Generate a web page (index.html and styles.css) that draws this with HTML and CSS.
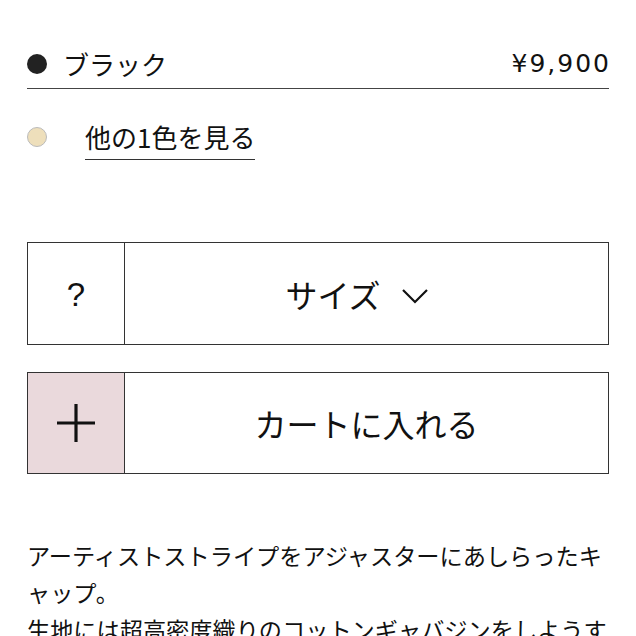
FILE: index.html
```html
<!DOCTYPE html>
<html lang="ja">
<head>
  <meta charset="UTF-8" />
  <meta name="viewport" content="width=device-width, initial-scale=1.0" />
  <title>キャップ</title>
  <link rel="stylesheet" href="styles.css">
</head>
<body>
  <div class="product">
    <div class="color-row">
      <span class="dot dot-black"></span>
      <span class="color-name">ブラック</span>
      <span class="price">¥9,900</span>
    </div>
    <div class="other-row">
      <span class="dot dot-beige"></span>
      <a class="other-link" href="#">他の1色を見る</a>
    </div>

    <div class="action size-box">
      <div class="action-side help">?</div>
      <div class="action-main size-main">
        <span>サイズ</span>
        <svg class="chevron" width="28" height="16" viewBox="0 0 28 16">
          <polyline points="2,2 14,14 26,2" fill="none" stroke="#111" stroke-width="2.2" />
        </svg>
      </div>
    </div>

    <div class="action cart-box">
      <div class="action-side plus">
        <svg width="40" height="40" viewBox="0 0 40 40">
          <line x1="1" y1="20" x2="39" y2="20" stroke="#111" stroke-width="3.2" />
          <line x1="20" y1="1" x2="20" y2="39" stroke="#111" stroke-width="3.2" />
        </svg>
      </div>
      <div class="action-main">カートに入れる</div>
    </div>

    <p class="desc">アーティストストライプをアジャスターにあしらったキャップ。<br>生地には超高密度織りのコットンギャバジンをしようすることで、しなやかな風合いに仕上げました。</p>
  </div>
</body>
</html>
```

FILE: styles.css
```css
body {
  margin: 0;
  background: #fff;
  color: #111;
  font-family: "Noto Sans CJK JP", "Noto Sans", sans-serif;
  overflow: hidden;
}
.product {
  width: 582px;
  margin-left: 27px;
}
.color-row {
  display: flex;
  align-items: center;
  margin-top: 40px;
  height: 48px;
  border-bottom: 1.5px solid #444;
}
.dot {
  width: 20px;
  height: 20px;
  border-radius: 50%;
  flex: none;
  box-sizing: border-box;
}
.dot-black {
  background: #222;
}
.dot-beige {
  background: #eedfbb;
  border: 1px solid #bbb;
  margin-top: 3px;
}
.color-name {
  font-size: 26px;
  line-height: 26px;
  margin-left: 16px;
}
.price {
  margin-left: auto;
  font-family: "DejaVu Sans", sans-serif;
  font-size: 25px;
  line-height: 26px;
  letter-spacing: 2px;
  margin-right: -2px;
}
.other-row {
  display: flex;
  align-items: flex-start;
  margin-top: 35px;
}
.other-link {
  margin-left: 38px;
  font-size: 26px;
  line-height: 26px;
  color: #111;
  text-decoration: none;
  padding-bottom: 9px;
  border-bottom: 1.5px solid #333;
}
.action {
  display: flex;
  border: 1.5px solid #333;
  box-sizing: border-box;
}
.size-box {
  margin-top: 82px;
  height: 103px;
}
.cart-box {
  margin-top: 27px;
  height: 102px;
}
.action-side {
  width: 97px;
  flex: none;
  border-right: 1.5px solid #333;
  display: flex;
  align-items: center;
  justify-content: center;
  box-sizing: border-box;
}
.help {
  font-family: "Liberation Sans", sans-serif;
  font-size: 33px;
  padding-top: 2px;
}
.plus {
  background: #ead9dc;
}
.action-main {
  flex: 1;
  display: flex;
  align-items: center;
  justify-content: center;
  font-size: 32px;
}
.size-main {
  gap: 20px;
  padding-right: 19px;
}
.chevron {
  margin-top: 4px;
}
.desc {
  margin: 63px 0 0;
  font-size: 23.2px;
  line-height: 37px;
}
```
